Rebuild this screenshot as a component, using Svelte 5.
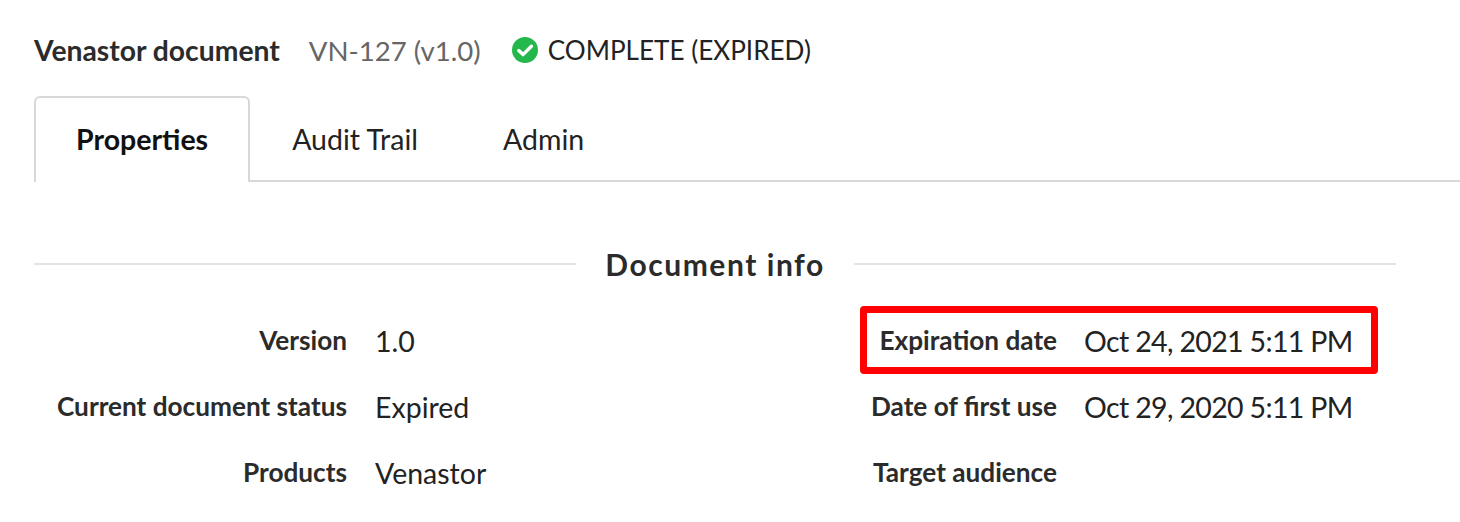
<script>
  const rows = [
    ["Version", "1.0", "Expiration date", "Oct 24, 2021 5:11 PM"],
    ["Current document status", "Expired", "Date of first use", "Oct 29, 2020 5:11 PM"],
    ["Products", "Venastor", "Target audience", ""]
  ];
</script>

<main class="page">
  <header class="head">
    <span class="title">Venastor document</span>
    <span class="ver">VN-127 (v1.0)</span>
    <svg class="check" viewBox="0 0 26 26" width="26" height="26" aria-hidden="true">
      <circle cx="13" cy="13" r="13" fill="#24b84c" />
      <path d="M6.8 13.6 L11 17.6 L19.4 9.2" fill="none" stroke="#fff" stroke-width="3.4" stroke-linecap="round" stroke-linejoin="round" />
    </svg>
    <span class="status">COMPLETE (EXPIRED)</span>
  </header>

  <nav class="tabs">
    <div class="tab active">Properties</div>
    <div class="tab">Audit Trail</div>
    <div class="tab">Admin</div>
  </nav>

  <section class="sec">
    <div class="divider"><span class="line"></span><h2>Document info</h2><span class="line"></span></div>
    <div class="grid">
      {#each rows as r}
        <div class="lab">{r[0]}</div>
        <div class="val">{r[1]}</div>
        <div class="lab">{r[2]}</div>
        <div class="val date">{r[3]}</div>
      {/each}
    </div>
    <div class="mark"></div>
  </section>
</main>

<style>
  :global(body) { margin: 0; background: #fff; }
  .page {
    height: 522px;
    overflow: hidden;
    box-sizing: border-box;
    padding-top: 32px;
    font-family: Lato, "Open Sans", sans-serif;
    color: #222;
  }
  .head {
    display: flex;
    align-items: center;
    height: 36px;
    padding-left: 34px;
    font-size: 26.1px;
  }
  .title { font-weight: 700; color: #2b2b2b; font-size: 28.3px; }
  .ver { margin-left: 29px; color: #666; font-size: 27.6px; }
  .check { margin-left: 31px; }
  .status { margin-left: 10px; color: #222; }
  .tabs {
    display: flex;
    margin-top: 28px;
    margin-left: 34px;
    border-bottom: 2px solid #d8d8d8;
    height: 84px;
  }
  .tab {
    font-size: 28.5px;
    padding: 0 40.5px 2px;
    display: flex;
    align-items: center;
    color: #222;
    box-sizing: border-box;
    height: 85px;
    border: 2px solid transparent;
    border-bottom: 0;
  }
  .tab.active {
    font-weight: 700;
    color: #111;
    background: #fff;
    border-color: #d8d8d8;
    border-radius: 6px 6px 0 0;
    height: 86px;
    padding: 0 39.5px 2px 40px;
  }
  .sec { position: relative; padding: 62px 64px 0 34px; }
  .divider {
    display: flex;
    align-items: center;
    gap: 29px;
    height: 40px;
  }
  .line { flex: 1; height: 2px; background: #e4e4e4; }
  .divider h2 {
    margin: 0;
    font-size: 30px;
    font-weight: 700;
    letter-spacing: 1.55px;
    color: #2b2b2b;
  }
  .grid {
    display: grid;
    grid-template-columns: 313px 468px 186px 1fr;
    grid-auto-rows: 66px;
    column-gap: 28px;
    margin-top: 23px;
    align-items: center;
  }
  .lab {
    font-size: 26.2px;
    font-weight: 700;
    text-align: right;
    color: #2b2b2b;
    white-space: nowrap;
  }
  .val { font-size: 28.5px; color: #222; white-space: nowrap; padding-top: 2px; }
  .date { letter-spacing: -0.65px; margin-left: -1px; }
  .mark {
    position: absolute;
    left: 860px;
    top: 124px;
    width: 518px;
    height: 68px;
    box-sizing: border-box;
    border: 7px solid #fe0000;
    border-radius: 4px;
  }
</style>
